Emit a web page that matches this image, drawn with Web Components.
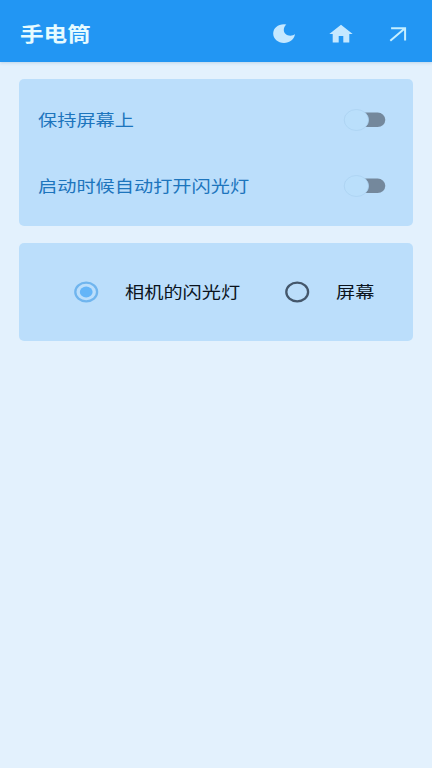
<!DOCTYPE html>
<html lang="zh-CN">
<head>
<meta charset="utf-8">
<title>手电筒</title>
<style>
html, body { margin: 0; height: 100%; }
body { font-family: "Noto Sans CJK SC", sans-serif; background: #e3f1fd; overflow: hidden; }
</style>
</head>
<body>
<torch-app></torch-app>
<script>
function define(name, html) {
  const t = document.createElement('template');
  t.innerHTML = html;
  customElements.define(name, class extends HTMLElement {
    constructor() {
      super();
      this.attachShadow({ mode: 'open' }).appendChild(t.content.cloneNode(true));
    }
  });
}

define('wide-text', `
<style>
:host { display: block; line-height: 24px; padding-bottom: 2px; white-space: nowrap; }
span { display: inline-block; transform: scaleX(1.18); transform-origin: 0 50%; }
</style><span><slot></slot></span>`);

define('app-bar', `
<style>
:host { display: flex; box-sizing: border-box; height: 62.400px; padding: 6px 24px 0 19.500px; align-items: center;
  justify-content: space-between; background: #2296f3; color: #e6fbff; box-shadow: 0 1px 3px rgba(60,110,160,.22); }
wide-text { font-size: 20px; font-weight: 700; padding-bottom: 1px; }
nav { display: flex; gap: 33.500px 35px; align-items: center; }
svg { display: block; }
svg:first-child { margin-right: -1.500px; }
</style>
<wide-text><slot></slot></wide-text>
<nav>
<svg width="24" height="20" viewBox="0 0 24 20" fill="#c5e8ff"><path d="M12 .3C5.800 .3 1.200 4.300 1.200 9.600 1.200 15 5.900 19 12 19c5.600 0 10.300-3.400 11-8.900-1 .9-2.900 1.600-4.700 1.600-3.700 0-6.500-2.400-6.500-5.600 0-2.300 1.100-4.300 2.600-5.500Q13.200 .3 12 .3z"/></svg>
<svg width="24" height="20" viewBox="0 0 24 20" fill="#c5e8ff"><path d="M12 .7.300 10.100H3.700V18.500H9.700V12.100H14.300V18.500H20.300V10.100H23.700z"/></svg>
<svg width="20" height="20" viewBox="0 0 20 20" fill="none" stroke="#c5efff" stroke-width="2"><path d="M3.100 4.200H17.100V16.600M16.700 4.600 2.300 16.800"/></svg>
</nav>`);

define('setting-card', `
<style>
:host { display: flex; flex-direction: column; box-sizing: border-box; background: #bbdefb; border-radius: 5px; }
</style><slot></slot>`);

define('toggle-switch', `
<style>
:host { display: block; width: 42px; height: 22px; }
svg { display: block; overflow: visible; }
</style>
<svg width="42" height="22" viewBox="0 0 42 22">
<rect x="6" y="3.600" width="35.300" height="14.400" rx="7.700" ry="7.200" fill="#74889c"/>
<ellipse cx="12.400" cy="11" rx="12.200" ry="10.500" fill="#badffb" stroke="#a9d0ef" stroke-width=".7"/>
</svg>`);

define('setting-row', `
<style>
:host { display: flex; height: 65.500px; align-items: center; justify-content: space-between; color: #1d75bd; font-size: 16.270px; }
</style>
<wide-text><slot></slot></wide-text><toggle-switch></toggle-switch>`);

define('radio-option', `
<style>
:host { display: grid; grid-template-columns: 24px auto; column-gap: 27px; align-items: center; font-size: 16.270px; color: #0b141d; --ring: #44576b; --dot: none; }
:host([checked]) { --ring: #70b5ee; --dot: #64b5f8; }
svg { display: block; overflow: visible; }
.ring { stroke: var(--ring); stroke-width: 2.300; fill: none; }
.dot { fill: var(--dot); }
</style>
<svg width="24" height="22" viewBox="0 0 24 22"><ellipse class="ring" cx="12.200" cy="11" rx="10.900" ry="9.300"/><ellipse class="dot" cx="12.200" cy="11" rx="6.400" ry="5.400"/></svg>
<wide-text><slot></slot></wide-text>`);

define('torch-app', `
<style>
:host { display: flex; flex-direction: column; height: 100vh; background: #e3f1fd; }
main { display: flex; flex-direction: column; gap: 17px; padding: 16.600px 19px; }
.switches { height: 147px; padding: 8px 27px 0 19.300px; gap: .5px; }
.modes { height: 98px; padding: 0 38px 0 55px; justify-content: center; }
.group { display: grid; grid-template-columns: 211px auto; }
</style>
<app-bar>手电筒</app-bar>
<main>
<setting-card class="switches">
<setting-row>保持屏幕上</setting-row>
<setting-row>启动时候自动打开闪光灯</setting-row>
</setting-card>
<setting-card class="modes"><div class="group">
<radio-option checked>相机的闪光灯</radio-option>
<radio-option>屏幕</radio-option>
</div></setting-card>
</main>`);
</script>
</body>
</html>
